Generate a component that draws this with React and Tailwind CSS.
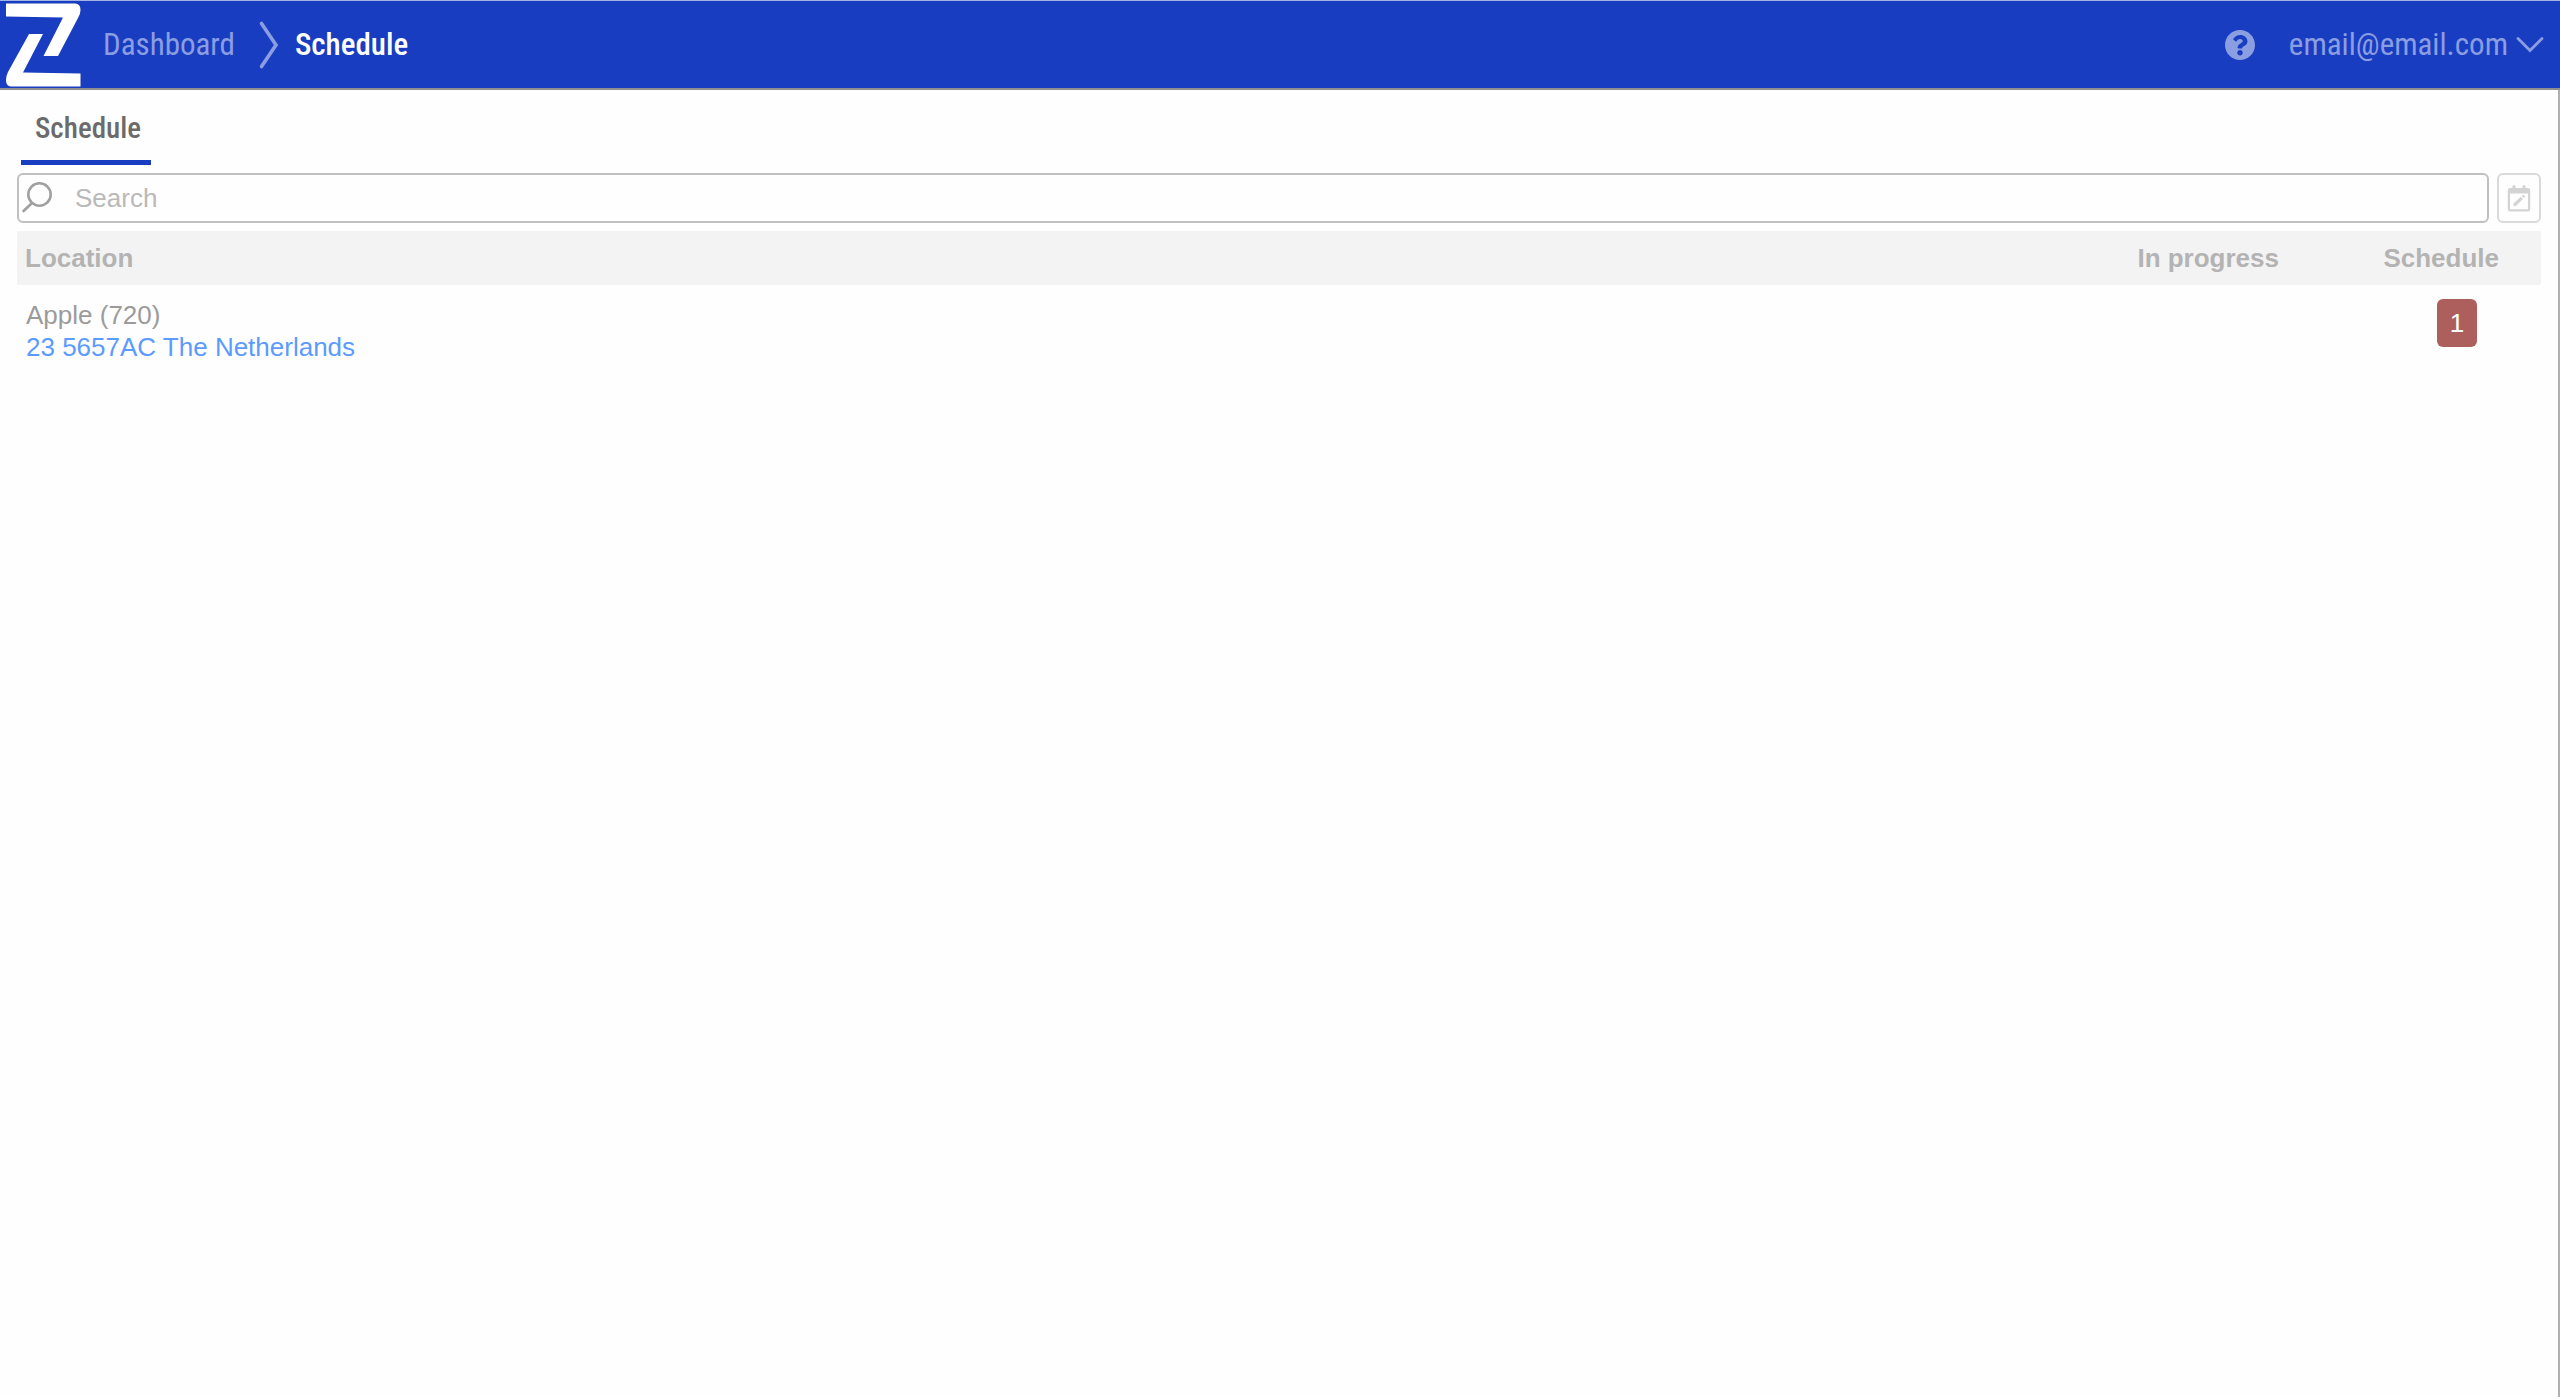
import { useState } from 'react'

const locations = [
  { id: 720, name: 'Apple (720)', address: '23 5657AC The Netherlands', inProgress: 0, scheduled: 1 },
]

const Logo = () => (
  <svg className="w-[76px] h-[84px]" viewBox="0 0 76 84" fill="white" aria-hidden="true">
    <path d="M1 0.500H70Q75.500 0.800 75.500 7Q75.500 11 73 15L53 53H38.500L58 14.500L1 13.500Z" />
    <path d="M75.500 83.500H6Q1 83.200 1 77Q1 73 3 69L24 31H38L18 69.500L75.500 70.500Z" />
  </svg>
)

const HelpIcon = () => (
  <svg className="w-[30px] h-[30px]" viewBox="8 8 496 496" fill="currentColor" aria-hidden="true">
    <path d="M504 256c0 136.997-111.043 248-248 248S8 392.997 8 256C8 119.083 119.043 8 256 8s248 111.083 248 248zM262.655 90c-54.497 0-89.255 22.957-116.549 63.758-3.536 5.286-2.353 12.415 2.715 16.258l34.699 26.31c5.205 3.947 12.621 3.008 16.665-2.122 17.864-22.658 30.113-35.797 57.303-35.797 20.429 0 45.698 13.148 45.698 32.958 0 14.976-12.363 22.667-32.534 33.976C247.128 238.528 216 254.941 216 296v4c0 6.627 5.373 12 12 12h56c6.627 0 12-5.373 12-12v-1.333c0-28.462 83.186-29.647 83.186-106.667 0-58.002-60.165-102-116.531-102zM256 338c-25.365 0-46 20.635-46 46 0 25.364 20.635 46 46 46s46-20.636 46-46c0-25.365-20.635-46-46-46z" />
  </svg>
)

const SearchIcon = () => (
  <svg className="w-8 h-8" viewBox="0 0 32 32" fill="none" stroke="currentColor" strokeWidth="2.600" strokeLinecap="round" aria-hidden="true">
    <circle cx="18.500" cy="12.500" r="11.200" />
    <path d="M10.500 21.500L2.500 29" />
  </svg>
)

const CalendarEditIcon = () => (
  <svg className="w-6 h-[27px]" viewBox="0 0 24 27" fill="currentColor" aria-hidden="true">
    <path fillRule="evenodd" d="M5.500 1.500a1.500 1.500 0 0 1 3 0V3h7V1.500a1.500 1.500 0 0 1 3 0V3H21a2.200 2.200 0 0 1 2.200 2.200V24.300a2.200 2.200 0 0 1-2.200 2.200H3A2.200 2.200 0 0 1 0.800 24.300V5.200A2.200 2.200 0 0 1 3 3h2.500zM3 8.500v15.800h18V8.500z" />
    <path d="M6.500 21v-2.500l7.300-6.800 2.200 2.200-7.200 7.100zM14.700 10.900l0.900-0.800q0.600-0.400 1.100 0l1 1q0.500 0.600 0 1.100l-0.900 0.900z" />
  </svg>
)

const Header = () => (
  <header className="flex items-center justify-between h-[90px] pl-[5px] pr-4 bg-[#193dc1] border-t border-t-[#a3b3e3] border-b-2 border-b-[#8f8f8f] font-['Roboto_Condensed','Liberation_Sans_Narrow',Roboto,sans-serif] text-[31px] leading-10 text-[#8a9ee1]">
    <nav className="flex items-center" aria-label="Breadcrumb">
      <a href="#home" aria-label="Home">
        <Logo />
      </a>
      <a href="#dashboard" className="ml-[22px]">Dashboard</a>
      <svg className="w-5 h-12 ml-6 mr-4" viewBox="0 0 20 48" fill="none" stroke="currentColor" strokeWidth="3.600" strokeLinecap="round" aria-hidden="true">
        <path d="M2.500 2.500L17 24L2.500 45.500" />
      </svg>
      <a href="#schedule" aria-current="page" className="font-medium text-white">Schedule</a>
    </nav>
    <div className="flex items-center gap-[34px]">
      <button type="button" aria-label="Help">
        <HelpIcon />
      </button>
      <button type="button" className="flex items-center gap-2">
        email@email.com
        <svg className="w-7 h-4" viewBox="0 0 28 16" fill="none" stroke="currentColor" strokeWidth="2.800" strokeLinecap="round" aria-hidden="true">
          <path d="M2 1.500L14 13.500L26 1.500" />
        </svg>
      </button>
    </div>
  </header>
)

const App = () => {
  const [search, setSearch] = useState('')

  const visible = locations.filter((location) =>
    `${location.name} ${location.address}`.toLowerCase().includes(search.toLowerCase())
  )

  return (
    <div className="flex flex-col min-h-screen bg-[#fefefe] font-['Liberation_Sans',Arial,sans-serif] text-[26px] leading-8">
      <Header />

      <main className="grow pl-[17px] pr-[17px] border-r-2 border-[#b0b0b0]">
        {/* Tabs */}
        <div className="flex pl-1">
          <button
            type="button"
            className="h-[75px] pl-[14px] pr-[10px] pt-1.5 border-b-5 border-[#193dc1] font-['Roboto_Condensed','Liberation_Sans_Narrow',Roboto,sans-serif] text-[29px] font-medium text-[#6b6b6b]"
          >
            Schedule
          </button>
        </div>

        {/* Search bar */}
        <div className="flex gap-2 mt-2">
          <label className="flex grow items-center gap-[22px] h-[50px] pl-0.5 border-2 border-[#c0c0c0] rounded-md text-[#a0a0a0]">
            <SearchIcon />
            <input
              type="text"
              aria-label="Search"
              placeholder="Search"
              value={search}
              onChange={(e) => setSearch(e.target.value)}
              className="grow outline-none text-[#6b6b6b] placeholder:text-[#b9b9b9]"
            />
          </label>
          <button
            type="button"
            aria-label="Edit schedule"
            className="flex items-center justify-center w-11 h-[50px] border-2 border-[#d9d9d9] rounded-md text-[#d3d3d3]"
          >
            <CalendarEditIcon />
          </button>
        </div>

        {/* Locations */}
        <table className="w-full mt-2 table-fixed">
          <thead>
            <tr className="h-[54px] bg-[#f3f3f3] text-[#b3b3b3]">
              <th className="pl-2 text-left">Location</th>
              <th className="w-[200px] pr-0.5 text-right">In progress</th>
              <th className="w-[260px] pr-[42px] text-right">Schedule</th>
            </tr>
          </thead>
          <tbody>
            {visible.map((location) => (
              <tr key={location.id} className="align-top">
                <td className="pl-[9px] pt-[14px]">
                  <div className="text-[#9b9b9b]">{location.name}</div>
                  <a href="#location" className="block text-[#5b9bff]">{location.address}</a>
                </td>
                <td className="pt-[14px] text-right">{location.inProgress || ''}</td>
                <td className="pt-[14px] pr-16">
                  <span className="flex items-center justify-center w-10 h-12 ml-auto rounded-md bg-[#ad5f5e] text-white">
                    {location.scheduled}
                  </span>
                </td>
              </tr>
            ))}
          </tbody>
        </table>
      </main>
    </div>
  )
}

export default App
